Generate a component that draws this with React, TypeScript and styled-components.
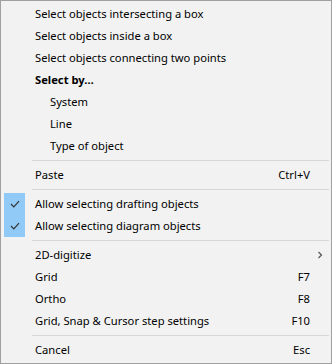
import React from "react";
import styled, { createGlobalStyle } from "styled-components";

const Global = createGlobalStyle`
  html, body { margin: 0; padding: 0; background: #ffffff; }
  * { box-sizing: border-box; }
`;

const Menu = styled.div`
  width: 332px;
  height: 364px;
  background: #f2f2f2;
  border: 1px solid #a0a0a0;
  padding: 2px 2px;
  display: flex;
  flex-direction: column;
  font-family: "Noto Sans", "Open Sans", sans-serif;
  font-size: 11.2px;
  color: #000;
`;

const Item = styled.div<{ $indent?: boolean; $bold?: boolean }>`
  height: 22px;
  display: grid;
  grid-template-columns: 22px 1fr auto 19px;
  align-items: center;
  font-weight: ${(p) => (p.$bold ? 700 : 400)};
  & > .label {
    padding-left: ${(p) => (p.$indent ? 25 : 10)}px;
    white-space: nowrap;
  }
  & > span {
    margin-top: -2px;
  }
`;

const Check = styled.div<{ $on?: boolean }>`
  height: 22px;
  margin-left: 1px;
  background: ${(p) => (p.$on ? "#91c9f7" : "transparent")};
  display: flex;
  align-items: center;
  justify-content: center;
`;

const Shortcut = styled.span`
  text-align: right;
  white-space: nowrap;
`;

const Arrow = styled.div`
  display: flex;
  align-items: center;
  justify-content: center;
`;

const Separator = styled.div`
  height: 7px;
  display: flex;
  align-items: center;
  padding-left: 29px;
  &::after {
    content: "";
    flex: 1;
    height: 1px;
    background: #d7d7d7;
  }
`;

const CheckIcon = () => (
  <svg width="10" height="8" viewBox="0 0 10 8">
    <path d="M1 4 L3.8 6.8 L9 1.2" fill="none" stroke="#333" strokeWidth="1.2" />
  </svg>
);

const ChevronIcon = () => (
  <svg width="6" height="8" viewBox="0 0 6 8">
    <path d="M1.5 1 L4.5 4 L1.5 7" fill="none" stroke="#555" strokeWidth="1.2" />
  </svg>
);

type Row = {
  label?: string;
  shortcut?: string;
  indent?: boolean;
  bold?: boolean;
  checked?: boolean;
  sub?: boolean;
  sep?: boolean;
};

const rows: Row[] = [
  { label: "Select objects intersecting a box" },
  { label: "Select objects inside a box" },
  { label: "Select objects connecting two points" },
  { label: "Select by…", bold: true },
  { label: "System", indent: true },
  { label: "Line", indent: true },
  { label: "Type of object", indent: true },
  { sep: true },
  { label: "Paste", shortcut: "Ctrl+V" },
  { sep: true },
  { label: "Allow selecting drafting objects", checked: true },
  { label: "Allow selecting diagram objects", checked: true },
  { sep: true },
  { label: "2D-digitize", sub: true },
  { label: "Grid", shortcut: "F7" },
  { label: "Ortho", shortcut: "F8" },
  { label: "Grid, Snap & Cursor step settings", shortcut: "F10" },
  { sep: true },
  { label: "Cancel", shortcut: "Esc" },
];

export default function App() {
  return (
    <>
      <Global />
      <Menu>
        {rows.map((r, i) =>
          r.sep ? (
            <Separator key={i} />
          ) : (
            <Item key={i} $indent={r.indent} $bold={r.bold}>
              <Check $on={r.checked}>{r.checked && <CheckIcon />}</Check>
              <span className="label">{r.label}</span>
              <Shortcut>{r.shortcut}</Shortcut>
              <Arrow>{r.sub && <ChevronIcon />}</Arrow>
            </Item>
          )
        )}
      </Menu>
    </>
  );
}
